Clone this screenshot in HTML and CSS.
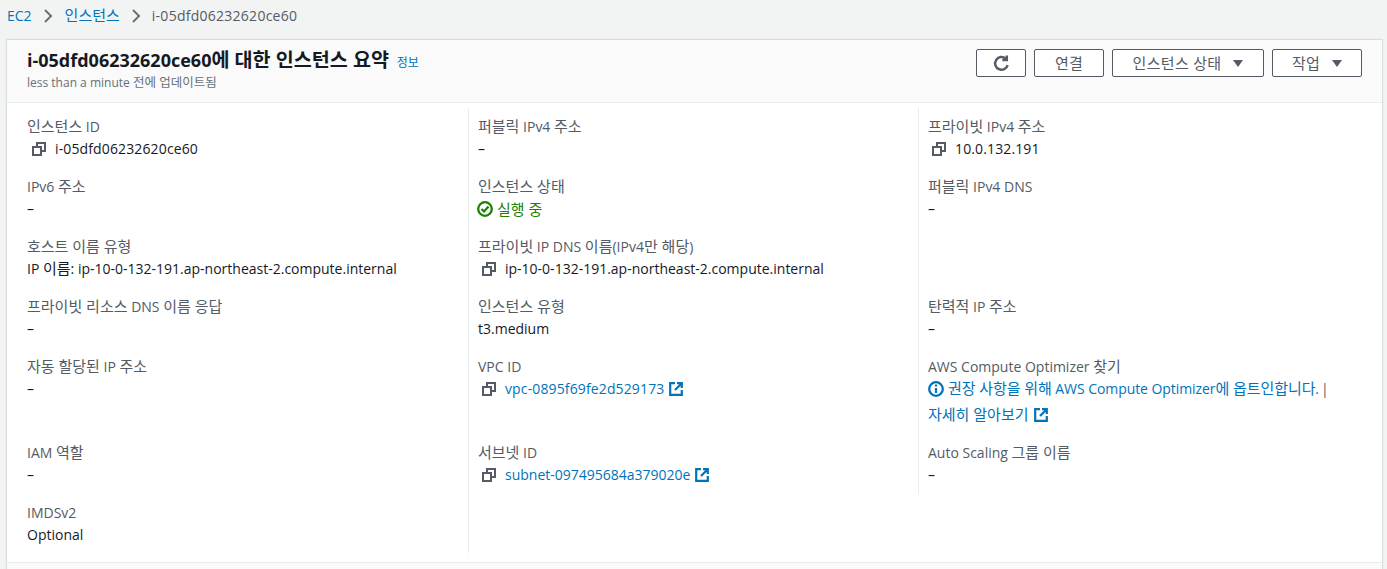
FILE: index.html
```html
<!DOCTYPE html>
<html lang="ko">
<head>
<meta charset="utf-8">
<title>인스턴스 요약</title>
<link rel="stylesheet" href="styles.css">
</head>
<body>
<svg class="defs" width="0" height="0" aria-hidden="true">
  <symbol id="copy" viewBox="0 0 14 14"><path d="M5 4V1h8v8H10M1 5h8v8H1z" fill="none" stroke="currentColor" stroke-width="2"/></symbol>
  <symbol id="ext" viewBox="0 0 14 14"><path d="M6 1.2H1.2v11.6h11.6V8M8 1.2h4.8V6M12.5 1.5 6 8" fill="none" stroke="currentColor" stroke-width="2.2"/></symbol>
</svg>
<nav class="crumbs">
  <a href="#"><span>EC2</span></a>
  <svg class="chev" viewBox="0 0 10 16"><path d="M2 2l6 6-6 6" fill="none" stroke="currentColor" stroke-width="2"/></svg>
  <a href="#"><span class="k">인스턴스</span></a>
  <svg class="chev" viewBox="0 0 10 16"><path d="M2 2l6 6-6 6" fill="none" stroke="currentColor" stroke-width="2"/></svg>
  <span class="crumb-id">i-05dfd06232620ce60</span>
</nav>
<main class="panel">
  <header class="head">
    <div class="titles">
      <h1 class="title">i-05dfd06232620ce60<span class="kt">에 대한 인스턴스 요약</span> <a class="info" href="#">정보</a></h1>
      <p class="sub">less than a minute <span class="ks">전에 업데이트됨</span></p>
    </div>
    <div class="actions">
      <button class="btn icon-btn"><svg viewBox="0 0 16 16" width="17" height="17"><path d="M13.8 9.5A6 6 0 1 1 11.8 3.2M13 .5v4.2H8.8" fill="none" stroke="currentColor" stroke-width="2.3"/></svg></button>
      <button class="btn btn-connect"><span class="k">연결</span></button>
      <button class="btn btn-state"><span class="k">인스턴스 상태</span><i class="caret"></i></button>
      <button class="btn btn-act"><span class="k">작업</span><i class="caret"></i></button>
    </div>
  </header>
  <section class="grid">
    <div class="cell"><div class="label"><span class="k">인스턴스</span> ID</div><div class="val"><svg class="copy"><use href="#copy"/></svg><span class="w">i-05dfd06232620ce60</span></div></div>
    <div class="cell"><div class="label"><span class="k">퍼블릭</span> IPv4 <span class="k">주소</span></div><div class="val">–</div></div>
    <div class="cell"><div class="label"><span class="k">프라이빗</span> IPv4 <span class="k">주소</span></div><div class="val"><svg class="copy"><use href="#copy"/></svg><span class="w">10.0.132.191</span></div></div>

    <div class="cell"><div class="label">IPv6 <span class="k">주소</span></div><div class="val">–</div></div>
    <div class="cell"><div class="label"><span class="k">인스턴스 상태</span></div><div class="val ok"><svg class="status" viewBox="0 0 16 16"><circle cx="8" cy="8" r="6.8" fill="none" stroke="currentColor" stroke-width="2.3"/><path d="M4.5 8l2.5 2.5 4.5-5" fill="none" stroke="currentColor" stroke-width="2.2"/></svg><span class="k">실행 중</span></div></div>
    <div class="cell"><div class="label"><span class="k">퍼블릭</span> IPv4 DNS</div><div class="val">–</div></div>

    <div class="cell"><div class="label"><span class="k">호스트 이름 유형</span></div><div class="val"><span>IP <span class="k">이름</span>: ip-10-0-132-191.ap-northeast-2.compute.internal</span></div></div>
    <div class="cell"><div class="label"><span class="k">프라이빗</span> IP DNS <span class="k">이름</span>(IPv4<span class="k">만 해당</span>)</div><div class="val"><svg class="copy"><use href="#copy"/></svg>ip-10-0-132-191.ap-northeast-2.compute.internal</div></div>
    <div class="cell"></div>

    <div class="cell"><div class="label"><span class="k">프라이빗 리소스</span> DNS <span class="k">이름 응답</span></div><div class="val">–</div></div>
    <div class="cell"><div class="label"><span class="k">인스턴스 유형</span></div><div class="val">t3.medium</div></div>
    <div class="cell"><div class="label"><span class="k">탄력적</span> IP <span class="k">주소</span></div><div class="val">–</div></div>

    <div class="cell"><div class="label"><span class="k">자동 할당된</span> IP <span class="k">주소</span></div><div class="val">–</div></div>
    <div class="cell"><div class="label">VPC ID</div><div class="val"><svg class="copy"><use href="#copy"/></svg><a href="#" class="w">vpc-0895f69fe2d529173</a><svg class="ext"><use href="#ext"/></svg></div></div>
    <div class="cell tall"><div class="label">AWS Compute Optimizer <span class="k">찾기</span></div>
      <div class="val"><a href="#" class="opt"><svg class="status" viewBox="0 0 16 16"><circle cx="8" cy="8" r="6.8" fill="none" stroke="currentColor" stroke-width="2.3"/><path d="M8 7v5M8 3.5v2" fill="none" stroke="currentColor" stroke-width="2.2"/></svg><span><span class="k">권장 사항을 위해</span> AWS Compute Optimizer<span class="k">에 옵트인합니다</span>.</span></a><span class="bar">|</span></div>
      <div class="val more"><a href="#"><span class="k">자세히 알아보기</span></a><svg class="ext"><use href="#ext"/></svg></div>
    </div>

    <div class="cell"><div class="label">IAM <span class="k">역할</span></div><div class="val">–</div></div>
    <div class="cell"><div class="label"><span class="k">서브넷</span> ID</div><div class="val"><svg class="copy"><use href="#copy"/></svg><a href="#">subnet-097495684a379020e</a><svg class="ext"><use href="#ext"/></svg></div></div>
    <div class="cell"><div class="label">Auto Scaling <span class="k">그룹 이름</span></div><div class="val">–</div></div>

    <div class="cell short"><div class="label">IMDSv2</div><div class="val">Optional</div></div>
    <div class="cell short"></div>
  </section>
  <div class="foot"></div>
</main>
</body>
</html>
```
FILE: styles.css
```css
html, body { margin: 0; height: 569px; overflow: hidden; }
body {
  background: #f2f3f3;
  color: #16191f;
  font: 14px/20px "Open Sans", "Noto Sans CJK KR", sans-serif;
  padding: 0 5px 0 7px;
}
.defs { position: absolute; }
a { color: #0073bb; text-decoration: none; }
.k { font-size: 15px; line-height: 1; }
.kt { font-size: 19.6px; line-height: 1; }
.ks { font-size: 12.5px; line-height: 1; }
.w { letter-spacing: .13px; }
.crumbs {
  height: 31px;
  display: flex;
  align-items: center;
  color: #545b64;
  padding-bottom: 2px;
}
.crumbs .k { margin-left: 1px; }
.crumb-id { letter-spacing: .26px; }
.chev { width: 10px; height: 16px; color: #687078; margin: 0 11px 0 11px; }
.panel {
  margin-top: 7px;
  background: #fff;
  box-shadow: 0 0 1px 1px rgba(0, 28, 36, .1);
  height: 529px;
}
.head {
  height: 63px;
  box-sizing: border-box;
  background: #fafafa;
  border-bottom: 1px solid #eaeded;
  padding: 8px 20px 0 20px;
  display: flex;
  justify-content: space-between;
}
.title { margin: 0; font-size: 18px; line-height: 24px; font-weight: 700; }
.info { font-size: 12px; font-weight: 400; margin-left: 3px; }
.sub { margin: -1px 0 0; font-size: 12px; line-height: 18px; color: #687078; }
.actions { display: flex; gap: 8px; padding-top: 1px; }
.btn {
  height: 28px;
  box-sizing: border-box;
  border: 1px solid #545b64;
  border-radius: 2px;
  background: #fff;
  color: #545b64;
  font: 14px/20px "Open Sans", "Noto Sans CJK KR", sans-serif;
  display: flex;
  align-items: center;
  justify-content: center;
  padding: 0;
}
.btn .k { letter-spacing: .3px; }
.icon-btn { width: 50px; }
.btn-connect { width: 70px; }
.btn-state { width: 152px; }
.btn-act { width: 90px; }
.caret {
  width: 0; height: 0;
  border: 5px solid transparent;
  border-top: 7px solid #545b64;
  border-bottom: 0;
  margin-left: 12px;
}
.grid {
  display: grid;
  grid-template-columns: 441px 450px 1fr;
  padding: 5px 0 0 20px;
}
.cell { padding: 9px 20px 0 0; min-height: 51px; }
.cell:nth-child(3n+2), .cell:nth-child(3n) { border-left: 1px solid #eaeded; padding-left: 9px; }
.cell.short { min-height: 50px; }
.cell.tall { padding-bottom: 9px; }
.label { color: #545b64; line-height: 20px; }
.val { display: flex; align-items: center; height: 20px; margin-top: 2px; white-space: nowrap; }
.ok { color: #1d8102; }
.ok .status { margin-left: -1px; }
.copy { width: 14px; height: 14px; color: #545b64; margin: 0 9px 0 5px; flex: none; }
.cell:nth-child(3n+2) .copy, .cell:nth-child(3n) .copy { margin-left: 4px; }
.ext { width: 14px; height: 14px; color: #0073bb; margin-left: 5px; flex: none; }
.status { width: 16px; height: 16px; margin-right: 4px; flex: none; }
.opt { display: flex; align-items: center; letter-spacing: -.07px; }
.bar { margin-left: 2px; color: #545b64; }
.more { margin-top: 6px; }
.foot { margin-top: 9px; border-top: 1px solid #eaeded; background: #fafafa; height: 8px; }
```
